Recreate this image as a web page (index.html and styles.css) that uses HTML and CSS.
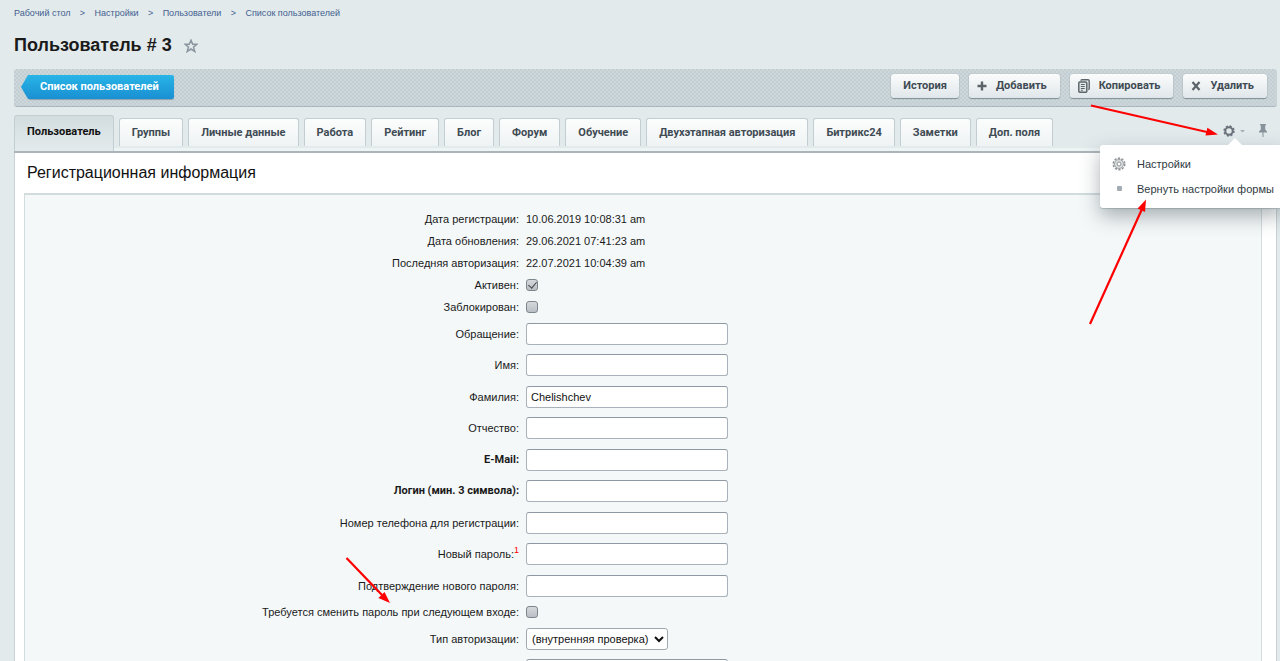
FILE: index.html
```html
<!DOCTYPE html>
<html lang="ru">
<head>
<meta charset="utf-8">
<title>Пользователь # 3</title>
<link rel="stylesheet" href="styles.css">
</head>
<body>
<nav class="crumbs">
  <a href="#">Рабочий стол</a><span>&gt;</span><a href="#">Настройки</a><span>&gt;</span><a href="#">Пользователи</a><span>&gt;</span><a href="#">Список пользователей</a>
</nav>
<header class="title">
  <h1>Пользователь # 3</h1>
  <button class="star" type="button" aria-label="В избранное">
    <svg width="14" height="14" viewBox="0 0 14 14"><path d="M7 1.200l1.700 4.100h4.200L9.500 8.100l1.300 4.400L7 10l-3.800 2.500 1.300-4.400L1.100 5.300h4.200z" fill="none" stroke="#8b95a0" stroke-width="1.500"/></svg>
  </button>
</header>
<div class="toolbar">
  <a class="back" href="#"><svg width="8" height="24" viewBox="0 0 8 24"><defs><linearGradient id="b" x2="0" y2="1"><stop stop-color="#27b5e7"/><stop offset="1" stop-color="#1a8fd2"/></linearGradient></defs><path d="M8 0H7L0 12l7 12h1z" fill="url(#b)"/></svg><span>Список пользователей</span></a>
  <div class="actions">
    <button class="btn" type="button">История</button>
    <button class="btn icon" type="button"><svg width="10" height="10" viewBox="0 0 10 10"><path d="M5 .5v9M.5 5h9" stroke="#5c646a" stroke-width="2.400"/></svg>Добавить</button>
    <button class="btn icon" type="button"><svg width="12" height="14" viewBox="0 0 12 14"><path d="M3 1.800Q3 .8 4 .8h6q1.200 0 1.200 1.200v7.500q0 1-1 1" fill="none" stroke="#5c646a" stroke-width="1.400"/><rect x=".8" y="3" width="8" height="10.200" rx="1" fill="#e4eaec" stroke="#5c646a" stroke-width="1.500"/><path d="M2.800 5.500h4M2.800 7.500h4M2.800 9.500h4M2.800 11.300h2" stroke="#5c646a"/></svg>Копировать</button>
    <button class="btn icon" type="button"><svg width="10" height="10" viewBox="0 0 10 10"><path d="M1.500 1l7 8M8.500 1l-7 8" stroke="#5c646a" stroke-width="2.200"/></svg>Удалить</button>
  </div>
</div>
<div class="tabs">
  <button class="tab active" type="button">Пользователь</button>
  <button class="tab" type="button">Группы</button>
  <button class="tab" type="button">Личные данные</button>
  <button class="tab" type="button">Работа</button>
  <button class="tab" type="button">Рейтинг</button>
  <button class="tab" type="button">Блог</button>
  <button class="tab" type="button">Форум</button>
  <button class="tab" type="button">Обучение</button>
  <button class="tab" type="button">Двухэтапная авторизация</button>
  <button class="tab" type="button">Битрикс24</button>
  <button class="tab" type="button">Заметки</button>
  <button class="tab" type="button">Доп. поля</button>
  <div class="tools">
    <button type="button" aria-label="Настройки формы"><svg width="22" height="12" viewBox="0 0 22 12"><circle cx="6" cy="6" r="4.700" fill="none" stroke="#6a737b" stroke-width="2" stroke-dasharray="2 1.690"/><circle cx="6" cy="6" r="3.700" fill="none" stroke="#6a737b" stroke-width="2"/><path d="M17 5h5l-2.500 2.500z" fill="#a3adb3"/></svg></button>
    <button type="button" aria-label="Закрепить"><svg width="8" height="13" viewBox="0 0 8 13"><path d="M1 0h6v1.200h-.8v4.300L8 7.500v1H0v-1l1.800-2V1.200H1zM3.500 8.500h1V13h-1z" fill="#88929a"/></svg></button>
    <div class="menu">
      <a href="#"><svg width="14" height="14" viewBox="0 0 14 14"><circle cx="7" cy="7" r="5.700" fill="none" stroke="#8f9497" stroke-width="1.600" stroke-dasharray="2.200 1.380"/><circle cx="7" cy="7" r="4.500" fill="#dcdfe0" stroke="#9da2a5"/><circle cx="7" cy="7" r="2" fill="#fff" stroke="#8f9497"/></svg>Настройки</a>
      <a href="#"><i></i>Вернуть настройки формы</a>
    </div>
  </div>
</div>
<main class="panel">
  <h2>Регистрационная информация</h2>
  <form class="form">
    <div class="row"><span class="label">Дата регистрации:</span><span>10.06.2019 10:08:31 am</span></div>
    <div class="row"><span class="label">Дата обновления:</span><span>29.06.2021 07:41:23 am</span></div>
    <div class="row"><span class="label">Последняя авторизация:</span><span>22.07.2021 10:04:39 am</span></div>
    <div class="row"><label class="label" for="f1">Активен:</label><input id="f1" type="checkbox" checked></div>
    <div class="row"><label class="label" for="f2">Заблокирован:</label><input id="f2" type="checkbox"></div>
    <div class="row field"><label class="label" for="f3">Обращение:</label><input id="f3" type="text"></div>
    <div class="row field"><label class="label" for="f4">Имя:</label><input id="f4" type="text"></div>
    <div class="row field"><label class="label" for="f5">Фамилия:</label><input id="f5" type="text" value="Chelishchev"></div>
    <div class="row field"><label class="label" for="f6">Отчество:</label><input id="f6" type="text"></div>
    <div class="row field"><label class="label must" for="f7">E-Mail:</label><input id="f7" type="text"></div>
    <div class="row field"><label class="label must" for="f8">Логин (мин. 3 символа):</label><input id="f8" type="text"></div>
    <div class="row field"><label class="label" for="f9">Номер телефона для регистрации:</label><input id="f9" type="text"></div>
    <div class="row field"><label class="label" for="f10">Новый пароль:<sup>1</sup></label><input id="f10" type="password"></div>
    <div class="row field"><label class="label" for="f11">Подтверждение нового пароля:</label><input id="f11" type="password"></div>
    <div class="row"><label class="label" for="f12">Требуется сменить пароль при следующем входе:</label><input id="f12" type="checkbox"></div>
    <div class="row field"><label class="label" for="f13">Тип авторизации:</label><select id="f13"><option>(внутренняя проверка)</option></select></div>
    <div class="row field"><span class="label"></span><input type="text" aria-label="Внешний код"></div>
  </form>
</main>
<svg class="arrows" width="1280" height="661" viewBox="0 0 1280 661">
  <g stroke="#f00" stroke-width="2.200" fill="#f00">
    <path d="M1091 105.500L1208 132.300"/><path d="M1218 134.500l-12.500 1 1.900-7.700z" stroke="none"/>
    <path d="M1090 324L1142 209"/><path d="M1146 199.500l-1 12.500-7.400-3.400z" stroke="none"/>
    <path d="M346.500 558L382 595"/><path d="M390 603l-11.600-5 6.100-6z" stroke="none"/>
  </g>
</svg>
</body>
</html>
```
FILE: styles.css
```css
* { box-sizing: border-box; }
body {
  margin: 0;
  height: 100vh;
  overflow: hidden;
  padding: 0 3px 0 14px;
  background: #e2eaec;
  color: #1a1a1a;
  font: 11px/14px "Liberation Sans", Arial, sans-serif;
}
button, input, select { font: inherit; margin: 0; }
button { padding: 0; border: 0; background: none; color: inherit; }
a { color: inherit; text-decoration: none; }
svg { flex: none; display: block; }
.back, .btn, .tab, .must { font-family: Roboto, "Liberation Sans", sans-serif; font-weight: bold; }
.crumbs { display: flex; padding-top: 6px; color: #44618f; font-size: 9px; }
.crumbs span { width: 24px; text-align: center; }
.title { display: flex; align-items: center; gap: 12px; height: 49px; }
h1 { margin: 0; font-size: 18px; line-height: 22px; }
.star { padding-top: 2px; }
.toolbar {
  display: flex;
  justify-content: space-between;
  height: 38px;
  padding: 5px 10px 0 7px;
  border-bottom: 1px solid #a9b6bb;
  border-radius: 3px;
  background: repeating-conic-gradient(#c3ced2 0 25%, #ced7db 0 50%) 0 0 / 4px 4px;
}
.back { display: flex; margin-top: 1px; height: 24px; color: #fff; line-height: 23px; }
.back span { padding: 0 15px 0 11px; border-radius: 0 2px 2px 0; background: linear-gradient(#27b5e7, #1a8fd2); box-shadow: 0 1px 1px #8ba3ae; }
.actions { display: flex; gap: 10px; }
.btn {
  display: flex;
  align-items: center;
  height: 24px;
  padding: 0 12px;
  border-radius: 3px;
  background: linear-gradient(#fbfcfc, #e0e7ea);
  box-shadow: 0 1px 1px #7f8c92, 0 0 1px #8a979d;
  color: #3f4b54;
}
.icon { gap: 9px; padding: 0 13px 0 8px; }
.tabs { display: flex; align-items: flex-end; gap: 5px; height: 46px; padding-bottom: 5px; border-bottom: 2px solid #abb4b9; box-shadow: inset 0 -3px #eef3f4; }
.tab {
  height: 28px;
  padding: 0 12px;
  border: 1px solid #c3ced2;
  border-bottom: 0;
  border-radius: 3px 3px 0 0;
  background: linear-gradient(#fcfdfd, #eff3f4);
  color: #3f4b54;
}
.active { height: 36px; margin-bottom: -5px; padding-bottom: 4px; background: linear-gradient(#d3dddf, #e2eaec); color: #111; }
.tools { position: relative; display: flex; align-items: center; gap: 14px; height: 31px; margin-left: auto; padding-right: 10px; }
.menu {
  position: absolute;
  top: 30px;
  right: -6px;
  z-index: 2;
  width: 183px;
  height: 63px;
  padding: 6px 0;
  border-radius: 3px 0 0 3px;
  background: #fff;
  box-shadow: 0 8px 20px rgba(70, 85, 92, .45), 0 1px 1px #c6d0d4;
}
.menu::before { content: ""; position: absolute; top: -7px; left: 128px; border: 7px solid transparent; border-top: 0; border-bottom-color: #fff; }
.menu a { display: grid; grid-template-columns: 14px 1fr; gap: 11px; align-items: center; height: 25px; padding-left: 12px; color: #303a42; white-space: nowrap; }
.menu i { width: 5px; height: 5px; margin-left: 5px; border-radius: 1px; background: #a3abb3; }
.panel { padding: 0 14px 0 9px; border-left: 1px solid #c8d2d6; border-right: 1px solid #c8d2d6; background: #fff; }
h2 { margin: 0; padding-left: 3px; color: #111; font-size: 16px; font-weight: normal; line-height: 40px; }
.form { height: 520px; padding: 13px 0 0 4px; border: 1px solid #d2dcdf; border-width: 2px 1px; background: #f4f8f9; }
.row { display: grid; grid-template-columns: 2fr 3fr; column-gap: 7px; align-items: center; height: 22px; }
.label { text-align: right; }
sup { color: #f00; font-size: 9px; line-height: 0; }
.field { height: 32px; }
.field:nth-child(even) { height: 31px; }
[type=text], [type=password] { width: 202px; height: 22px; padding: 0 4px; border: 1px solid #a9b1ba; border-top-color: #8f99a3; border-radius: 3px; background: #fff; color: #111; }
select { width: 142px; height: 22px; padding: 0 1px; border: 1px solid #a0a9b2; border-radius: 3px; background: #fff; color: #111; }
[type=checkbox] { appearance: none; width: 12px; height: 12px; border: 1px solid #7e868d; border-radius: 3px; background: linear-gradient(#d5d9dc, #b9bfc4); }
[type=checkbox]:checked::before { content: ""; display: block; width: 4px; height: 7px; margin: 0 0 0 3px; border: solid #444; border-width: 0 1px 1px 0; transform: rotate(40deg); }
.arrows { position: absolute; top: 0; left: 0; z-index: 3; pointer-events: none; }
```
